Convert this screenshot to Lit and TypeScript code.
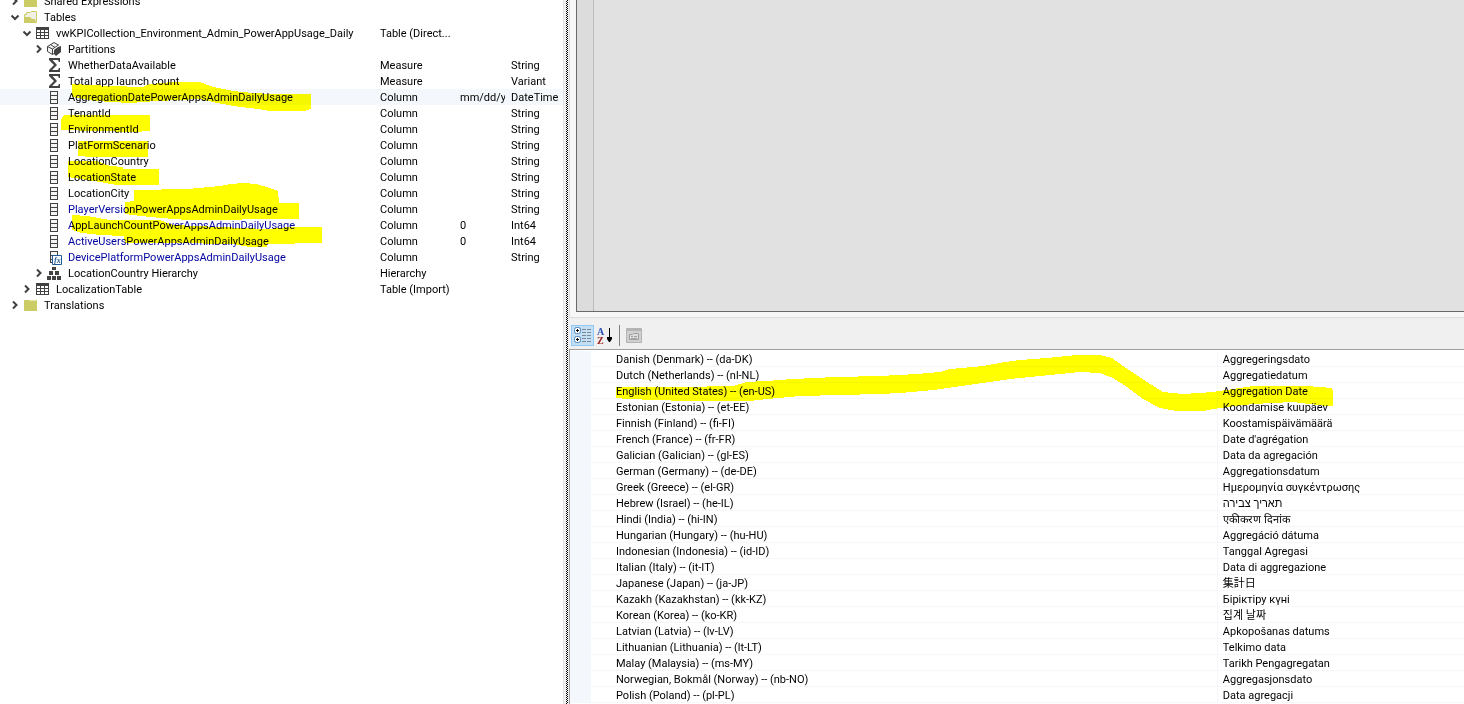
import { LitElement, html, svg, css, nothing } from "lit";
import { customElement, property } from "lit/decorators.js";
import { classMap } from "lit/directives/class-map.js";

type IconName = "folder" | "folderOpen" | "table" | "partitions" | "measure" | "column" | "calculated" | "hierarchy";

interface TreeRow {
  name: string;
  icon: IconName;
  level: number;
  open?: boolean;
  kind?: string;
  format?: string;
  type?: string;
  selected?: boolean;
  linked?: boolean;
}

const column = (name: string, extra: Partial<TreeRow> = {}): TreeRow => ({
  name, icon: "column", level: 2, kind: "Column", type: "String", ...extra,
});

const TREE: TreeRow[] = [
  { name: "Shared Expressions", icon: "folder", level: 0, open: false },
  { name: "Tables", icon: "folderOpen", level: 0, open: true },
  { name: "vwKPICollection_Environment_Admin_PowerAppUsage_Daily", icon: "table", level: 1, open: true, kind: "Table (Direct..." },
  { name: "Partitions", icon: "partitions", level: 2, open: false },
  { name: "WhetherDataAvailable", icon: "measure", level: 2, kind: "Measure", type: "String" },
  { name: "Total app launch count", icon: "measure", level: 2, kind: "Measure", type: "Variant" },
  column("AggregationDatePowerAppsAdminDailyUsage", { format: "mm/dd/yy", type: "DateTime", selected: true }),
  column("TenantId"),
  column("EnvironmentId"),
  column("PlatFormScenario"),
  column("LocationCountry"),
  column("LocationState"),
  column("LocationCity"),
  column("PlayerVersionPowerAppsAdminDailyUsage", { linked: true }),
  column("AppLaunchCountPowerAppsAdminDailyUsage", { linked: true, format: "0", type: "Int64" }),
  column("ActiveUsersPowerAppsAdminDailyUsage", { linked: true, format: "0", type: "Int64" }),
  column("DevicePlatformPowerAppsAdminDailyUsage", { linked: true, icon: "calculated" }),
  { name: "LocationCountry Hierarchy", icon: "hierarchy", level: 2, open: false, kind: "Hierarchy" },
  { name: "LocalizationTable", icon: "table", level: 1, open: false, kind: "Table (Import)" },
  { name: "Translations", icon: "folder", level: 0, open: false },
];

const TRANSLATIONS: [string, string][] = [
  ["Danish (Denmark) -- (da-DK)", "Aggregeringsdato"],
  ["Dutch (Netherlands) -- (nl-NL)", "Aggregatiedatum"],
  ["English (United States) -- (en-US)", "Aggregation Date"],
  ["Estonian (Estonia) -- (et-EE)", "Koondamise kuupäev"],
  ["Finnish (Finland) -- (fi-FI)", "Koostamispäivämäärä"],
  ["French (France) -- (fr-FR)", "Date d'agrégation"],
  ["Galician (Galician) -- (gl-ES)", "Data da agregación"],
  ["German (Germany) -- (de-DE)", "Aggregationsdatum"],
  ["Greek (Greece) -- (el-GR)", "Ημερομηνία συγκέντρωσης"],
  ["Hebrew (Israel) -- (he-IL)", "תאריך צבירה"],
  ["Hindi (India) -- (hi-IN)", "एकीकरण दिनांक"],
  ["Hungarian (Hungary) -- (hu-HU)", "Aggregáció dátuma"],
  ["Indonesian (Indonesia) -- (id-ID)", "Tanggal Agregasi"],
  ["Italian (Italy) -- (it-IT)", "Data di aggregazione"],
  ["Japanese (Japan) -- (ja-JP)", "集計日"],
  ["Kazakh (Kazakhstan) -- (kk-KZ)", "Біріктіру күні"],
  ["Korean (Korea) -- (ko-KR)", "집계 날짜"],
  ["Latvian (Latvia) -- (lv-LV)", "Apkopošanas datums"],
  ["Lithuanian (Lithuania) -- (lt-LT)", "Telkimo data"],
  ["Malay (Malaysia) -- (ms-MY)", "Tarikh Pengagregatan"],
  ["Norwegian, Bokmål (Norway) -- (nb-NO)", "Aggregasjonsdato"],
  ["Polish (Poland) -- (pl-PL)", "Data agregacji"],
];

const MARKER_STROKES = [
  "M72 84L110 86L143 87L150 84L173 82H200L213 87L233 91L253 93L270 94H311V109L304 111H270L258 109L240 107L217 103L200 99L157 101L130 103L95 101L72 97Z",
  "M64 115H150V131L134 132L61 130V120Z",
  "M78 141H148V157H92L78 156Z",
  "M68 161H97L110 166L123 167V169H159V185H117L100 182L68 177Z",
  "M134 190L187 189L220 186L230 184L243 183L256 184L267 187L278 191L279 203H299V219L187 220L150 217L125 214V202L134 201Z",
  "M72 215L87 216L110 220H160L173 225L267 229L290 227H322V243L267 244V247H250L233 244L173 243L125 243L124 236L100 235L82 233L72 230Z",
  "M616 387L680 387L733 386L747 382L766 381L793 379L835 377L880 376L917 374L940 372L950 369L983 366L1005 362L1020 360L1047 358L1077 355H1100L1112 358L1123 366L1147 382L1163 392L1183 394L1213 392L1253 386H1307L1332 388L1333 391V406H1326L1293 402L1253 404L1220 408L1203 411H1177L1160 408L1143 399L1127 387L1113 378L1100 373L1080 372L1040 376L1010 379L983 383L933 390L900 393L880 394L800 396L767 399L750 401H685L628 399L616 398Z",
];

const GLYPHS: Record<IconName, unknown> = {
  folder: svg`<path fill="#cccc66" d="M2 3H8V4H9V3H15V14H2Z"/><path fill="#e4e4ac" d="M9 3h5v1H9z"/>`,
  folderOpen: svg`<path fill="#f0f0e4" stroke="#cccc66" d="M4.500 3.500H8.500L9.500 2.500H14.500V13.500H2.500V5.500H4.500Z"/><path fill="#cccc66" d="M2 14V8H8L10 10H13L14 14Z"/>`,
  table: svg`<path fill="#424242" d="M2 2H15V14H2Z"/><path fill="#fff" d="M3 5h3v2H3zM7 5h3v2H7zM11 5h3v2h-3zM3 8h3v2H3zM7 8h3v2H7zM11 8h3v2h-3zM3 11h3v2H3zM7 11h3v2H7zM11 11h3v2h-3z"/>`,
  partitions: svg`<path fill="#f2f2f2" stroke="#424242" d="M1.500 5.500L8 1.500L12.500 4L6.500 8V13.500L1.500 10.500Z"/><path fill="none" stroke="#424242" d="M1.500 5.500L6.500 8M4.500 3.500L9 6.500M6.500 13.500L9 12"/><path fill="#424242" d="M8 9L12 6L15 5V11L10 15L8 13Z"/>`,
  measure: svg`<path fill="#424242" d="M3 1H14V5H13L12 3H6.500L11 8L6 13H12L13 11H14V15H3V13L8 8L3 3Z"/>`,
  column: svg`<path fill="#424242" d="M4 2H12V15H4Z"/><path fill="#f4f4f4" d="M5 3h6v3H5zM5 7h6v3H5zM5 11h6v3H5z"/>`,
  calculated: svg`<path fill="#424242" d="M4 2H12V14H4Z"/><path fill="#f4f4f4" d="M5 3h6v3H5zM5 7h6v3H5zM5 11h6v2H5z"/><path fill="#fff" stroke="#1f5c99" d="M6.500 6.500H15.500V15.500H6.500Z"/><text x="8" y="14" class="fx">fx</text>`,
  hierarchy: svg`<path fill="#424242" d="M6 2h4v3H6zM3 6h4v4H3zM9 6h4v4H9zM1 11h4v4H1zM6 11h4v4H6zM11 11h4v4h-4z"/>`,
};

const shared = css`
  :host {
    font: 11px/14px Roboto, "Liberation Sans", "Noto Sans CJK JP", "Noto Sans CJK KR", sans-serif;
    color: #000;
  }
  table {
    width: 100%;
    border-collapse: separate;
    border-spacing: 0;
    table-layout: fixed;
  }
  td, th {
    padding: 2px 0 0;
    font-weight: normal;
    text-align: left;
    vertical-align: top;
    white-space: nowrap;
    overflow: hidden;
  }
  button {
    border: 0;
    padding: 0;
    background: none;
    display: grid;
    place-items: center;
  }
  svg {
    display: block;
  }
`;

@customElement("model-tree")
export class ModelTree extends LitElement {
  @property({ attribute: false }) rows: TreeRow[] = [];

  static styles = [shared, css`
    :host {
      display: block;
      overflow: hidden;
      background: #fff;
      border-right: 1px solid #e3e3e3;
    }
    .scrolled { margin-top: -7px; }
    .kind { width: 80px; }
    .format { width: 45px; }
    .gap { width: 6px; }
    .type { width: 52px; }
    tr { height: 16px; }
    .selected { background: #f4f7fc; }
    .linked { color: #0000a0; }
    .tree-cell { padding: 0; }
    .name {
      display: flex;
      height: 16px;
      padding-left: 8px;
    }
    .label { padding-top: 2px; }
    .indent { flex: none; width: 12px; }
    .toggle { flex: none; width: 14px; height: 16px; }
    .icon { flex: none; width: 16px; height: 16px; margin-right: 6px; }
    .fx { font: italic bold 8px "Liberation Serif", serif; fill: #1f5c99; }
  `];

  private row(r: TreeRow) {
    const chevron = r.open ? "M3.500 6.500L7 10L10.500 6.500" : "M5 4.500L8.500 8L5 11.500";
    return html`<tr class=${classMap({ selected: !!r.selected })}>
      <td class="tree-cell"><div class=${classMap({ name: true, linked: !!r.linked })}>
        ${Array.from({ length: r.level }, () => html`<span class="indent"></span>`)}
        ${r.open === undefined
          ? html`<span class="toggle"></span>`
          : html`<button class="toggle" aria-label="Toggle ${r.name}" aria-expanded=${r.open}>
              <svg width="14" height="16"><path d=${chevron} fill="none" stroke="#404040" stroke-width="2"/></svg>
            </button>`}
        <svg class="icon" viewBox="0 0 16 16" aria-hidden="true">${GLYPHS[r.icon]}</svg>
        <span class="label">${r.name}</span>
      </div></td>
      <td>${r.kind ?? nothing}</td>
      <td>${r.format ?? nothing}</td>
      <td></td>
      <td>${r.type ?? nothing}</td>
    </tr>`;
  }

  render() {
    return html`<table class="scrolled" aria-label="Model">
      <colgroup><col><col class="kind"><col class="format"><col class="gap"><col class="type"></colgroup>
      <tbody>${this.rows.map((r) => this.row(r))}</tbody>
    </table>`;
  }
}

@customElement("property-grid")
export class PropertyGrid extends LitElement {
  @property({ attribute: false }) entries: [string, string][] = [];

  static styles = [shared, css`
    :host {
      display: flex;
      flex-direction: column;
      overflow: hidden;
      background: #f0f0f0;
    }
    .toolbar {
      flex: none;
      display: flex;
      align-items: flex-start;
      height: 31px;
      padding: 7px 2px 0;
      box-sizing: border-box;
    }
    .tool { width: 23px; height: 21px; }
    .pressed {
      box-sizing: border-box;
      background: #c4def4;
      border: 1px solid #90c8f6;
    }
    .rule { width: 1px; height: 21px; margin: 0 3px 0 2px; background: #808080; }
    .grid {
      flex: 1;
      overflow: hidden;
      padding-top: 1px;
      border: solid #a0a0a0;
      border-width: 1px 0 0 1px;
      background: #fff;
    }
    .gutter { width: 21px; }
    .key { width: 70%; }
    .edge { background: #f4f7fc; }
    tr { height: 16px; }
    th, td { line-height: 13px; height: 13px; border-bottom: 1px solid #f4f7fc; }
    th { padding-left: 25px; }
    .value { padding-left: 5px; border-left: 1px solid #f4f7fc; }
    .a, .z { font: bold 10px "Liberation Serif", serif; fill: #2a4fb4; }
    .z { fill: #9c2020; }
  `];

  render() {
    return html`
      <div class="toolbar" role="toolbar" aria-label="Properties">
        <button class="tool pressed" aria-label="Categorized" aria-pressed="true">
          <svg width="17" height="17" aria-hidden="true">
            <rect x=".5" y=".5" width="6" height="6" rx="2" fill="#fff" stroke="#4a86c0"/>
            <rect x=".5" y="9.500" width="6" height="6" rx="2" fill="#fff" stroke="#4a86c0"/>
            <path stroke="#000" d="M2 3.500h3M3.500 2v3M2 12.500h3M3.500 11v3"/>
            <path stroke="#7c8796" stroke-dasharray="4 1" d="M8 2.500h9M8 5.500h9M8 8.500h9M8 11.500h9M8 14.500h9"/>
          </svg>
        </button>
        <button class="tool" aria-label="Alphabetical">
          <svg width="19" height="19" aria-hidden="true">
            <text class="a" x="1" y="9">A</text><text class="z" x="1" y="18">Z</text>
            <path stroke="#000" d="M13.500 2v10"/><path d="M11 11h5v2l-2 3h-1l-2-3z"/>
          </svg>
        </button>
        <span class="rule"></span>
        <button class="tool" aria-label="Property pages" disabled>
          <svg width="17" height="15" aria-hidden="true">
            <path fill="#d0d0d0" stroke="#b4b4b4" d="M.5 .5h15v14H.5z"/>
            <path fill="#b4b4b4" d="M1 1h14v2H1z"/>
            <path fill="#dcdcdc" stroke="#a0a0a0" d="M3.500 6.500h3l1-1h5v6h-9z"/>
            <path stroke="#a0a0a0" d="M5 8.500h2M8 8.500h3M5 10.500h6"/>
          </svg>
        </button>
      </div>
      <div class="grid">
        <table aria-label="Translated names">
          <colgroup><col class="gutter"><col class="key"><col></colgroup>
          <tbody>${this.entries.map(([key, value]) => html`<tr>
            <td class="edge"></td><th scope="row">${key}</th><td class="value"><bdi>${value}</bdi></td>
          </tr>`)}</tbody>
        </table>
      </div>`;
  }
}

@customElement("app-root")
export class AppRoot extends LitElement {
  static styles = css`
    :host {
      position: relative;
      display: grid;
      grid-template-columns: 564fr 2px 2px 896fr;
      height: 100vh;
      overflow: hidden;
      background: #f0f0f0;
    }
    .splitter {
      grid-column: 3;
      background: repeating-conic-gradient(#000 0 25%, #fff 0 50%) 0 0 / 2px 2px;
    }
    .side {
      display: grid;
      grid-template-rows: 318fr 386fr;
      min-width: 0;
      min-height: 0;
      padding-left: 1px;
    }
    .editor {
      display: flex;
      padding: 0 0 5px 6px;
      border: solid #dcdcdc;
      border-width: 0 0 1px 1px;
      background: #f7f7f7;
    }
    .canvas {
      flex: 1;
      display: flex;
      border: solid #696969;
      border-width: 0 0 1px 1px;
      background: #e1e1e1;
    }
    .margin {
      width: 16px;
      background: #dcdcdc;
      border-right: 1px solid #bcbcbc;
    }
    property-grid { min-height: 0; }
    .marker {
      position: absolute;
      top: 0;
      left: 0;
      width: 1464px;
      height: 704px;
      pointer-events: none;
      mix-blend-mode: multiply;
      fill: #ff0;
    }
  `;

  render() {
    return html`
      <model-tree .rows=${TREE}></model-tree>
      <div class="splitter" role="separator"></div>
      <main class="side">
        <div class="editor"><div class="canvas"><div class="margin"></div></div></div>
        <property-grid .entries=${TRANSLATIONS}></property-grid>
      </main>
      <svg class="marker" viewBox="0 0 1464 704" shape-rendering="crispEdges" aria-hidden="true">
        ${MARKER_STROKES.map((d) => svg`<path d=${d}/>`)}
      </svg>`;
  }
}
